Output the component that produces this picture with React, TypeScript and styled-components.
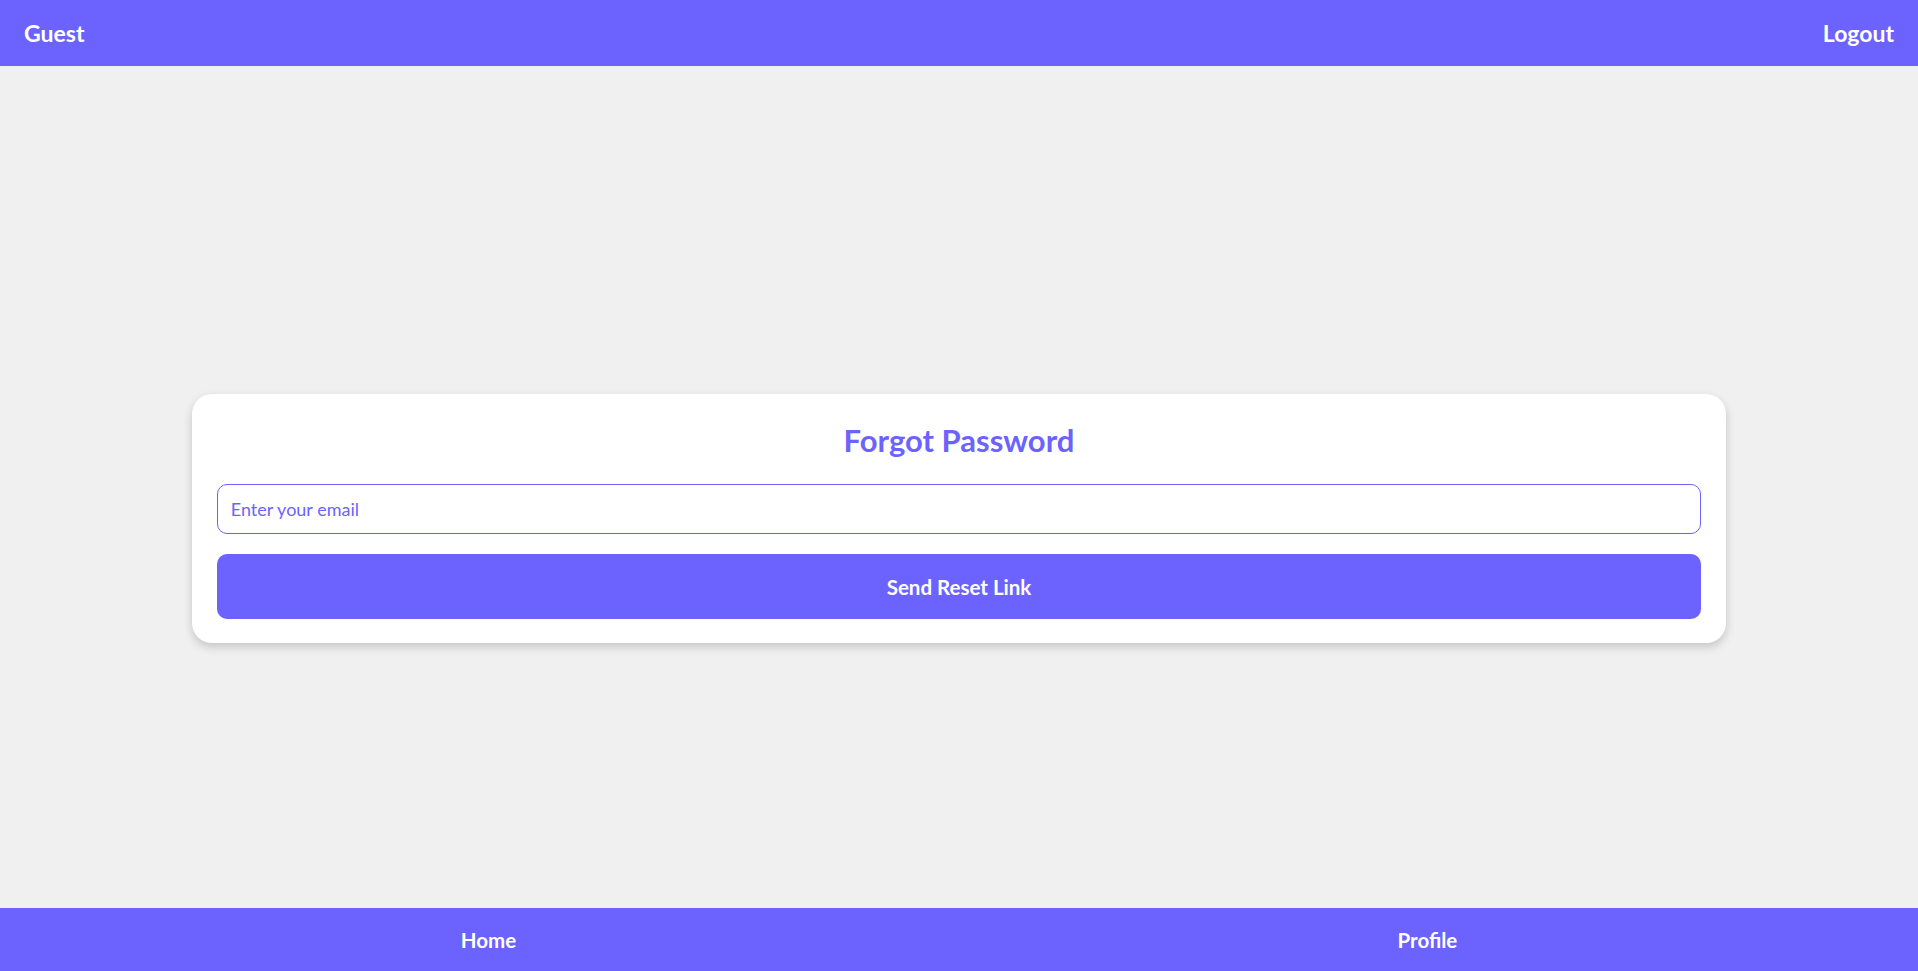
import { FC } from 'react'
import styled, { createGlobalStyle } from 'styled-components'

const PRIMARY = '#6c63ff'
const HEADER_HEIGHT = 66
const FOOTER_HEIGHT = 63

const GlobalStyles = createGlobalStyle`
  html,
  body {
    margin: 0;
    padding: 0;
    background: #f0f0f0;
    font-family: Lato, "Open Sans", "Liberation Sans", sans-serif;
  }

  * {
    box-sizing: border-box;
  }
`

const Page = styled.div`
  min-height: 100vh;
  display: flex;
  flex-direction: column;
`

const Header = styled.header`
  height: ${HEADER_HEIGHT}px;
  background: ${PRIMARY};
  display: flex;
  justify-content: space-between;
  align-items: center;
  padding: 0 24px;
`

const HeaderText = styled.span`
  color: #fff;
  font-size: 23px;
  font-weight: 700;
`

const Main = styled.main`
  flex: 1;
  display: flex;
  align-items: center;
  justify-content: center;
`

const Card = styled.div`
  width: 80%;
  background: #fff;
  border-radius: 20px;
  padding: 24px 25px;
  box-shadow: 0 4px 10px rgba(0, 0, 0, 0.18);
`

const Title = styled.h2`
  margin: 4px 0 26px;
  text-align: center;
  color: ${PRIMARY};
  font-size: 31px;
  line-height: 36px;
  font-weight: 700;
`

const Input = styled.input`
  display: block;
  width: 100%;
  height: 50px;
  padding: 0 13px;
  border: 1px solid ${PRIMARY};
  border-radius: 10px;
  font-family: inherit;
  font-size: 18px;
  color: ${PRIMARY};
  outline: none;

  &::placeholder {
    color: ${PRIMARY};
    opacity: 1;
  }
`

const SubmitButton = styled.button`
  display: block;
  width: 100%;
  height: 65px;
  margin-top: 20px;
  border: none;
  border-radius: 10px;
  background: ${PRIMARY};
  color: #fff;
  font-family: inherit;
  font-size: 20.5px;
  font-weight: 700;
  cursor: pointer;
`

const Footer = styled.footer`
  position: fixed;
  left: 0;
  right: 0;
  bottom: 0;
  height: ${FOOTER_HEIGHT}px;
  background: ${PRIMARY};
  display: flex;
  justify-content: space-around;
  align-items: center;
  padding: 0 20px;
`

const FooterLink = styled.a`
  color: #fff;
  font-size: 20.5px;
  font-weight: 700;
  text-decoration: none;
  cursor: pointer;
`

const App: FC = () => {
  return (
    <Page>
      <GlobalStyles />

      <Header>
        <HeaderText>Guest</HeaderText>
        <HeaderText>Logout</HeaderText>
      </Header>

      <Main>
        <Card>
          <Title>Forgot Password</Title>
          <Input type="email" placeholder="Enter your email" />
          <SubmitButton type="button">Send Reset Link</SubmitButton>
        </Card>
      </Main>

      <Footer>
        <FooterLink>Home</FooterLink>
        <FooterLink>Profile</FooterLink>
      </Footer>
    </Page>
  )
}

export default App
